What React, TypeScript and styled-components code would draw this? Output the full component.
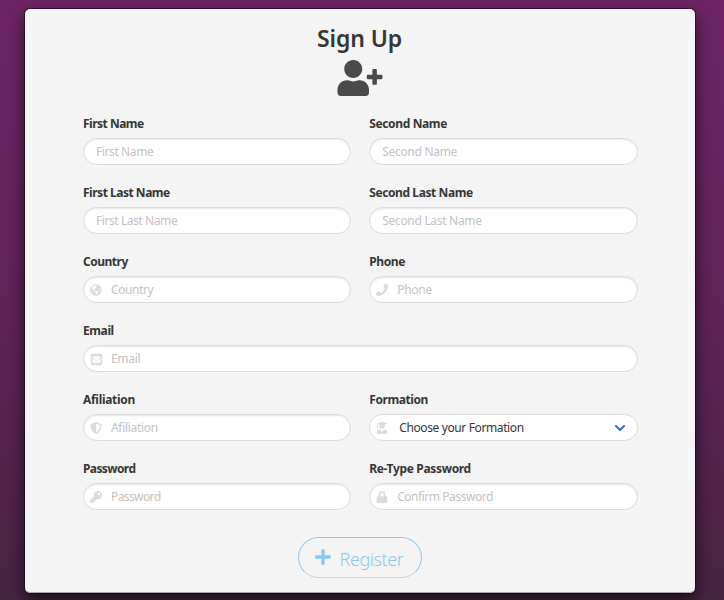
import React from "react";
import styled, { createGlobalStyle } from "styled-components";
import {
  FaUserPlus, FaGlobeAmericas, FaPhone, FaEnvelopeSquare, FaShieldAlt,
  FaUserGraduate, FaKey, FaLock, FaPlus,
} from "react-icons/fa";

const GlobalStyle = createGlobalStyle`
  *, *::before, *::after { box-sizing: border-box; }
  html, body { margin: 0; height: 100%; overflow: hidden; }
  body { font-family: "Noto Sans", "Open Sans", sans-serif; color: #363636; }
`;

const Page = styled.main`
  height: 600px;
  padding: 9px 29px 7px 25px;
  background: linear-gradient(#6c2562, #6a2460 20%, #5c2254 62%, #452440);
`;

const Card = styled.form`
  height: 584px;
  padding: 14px 57px 0 58px;
  border-radius: 5px;
  background: #f4f4f4;
  box-shadow: inset 0 -1px 0 #a9a5a9, 0 0 0 1px rgba(20, 5, 25, 0.6), 0 8px 16px rgba(10, 10, 10, 0.75);
`;

const Header = styled.header`
  display: flex;
  flex-direction: column;
  align-items: center;
  height: 92px;
  margin-right: 2px;
  color: #4a4a4a;
  svg { display: block; width: 46px; height: 36px; }
`;

const Title = styled.h1`
  margin: 0;
  height: 37px;
  font-size: 23px;
  font-weight: 600;
  line-height: 30px;
  letter-spacing: -0.1px;
  color: #363636;
`;

const Fields = styled.div`
  display: grid;
  grid-template-columns: 268.2px 268.8px;
  column-gap: 18px;
  grid-auto-rows: 69px;
`;

const Field = styled.div<{ $wide?: boolean }>`
  grid-column: ${(p) => (p.$wide ? "1 / -1" : "auto")};
`;

const Label = styled.label<{ $spacing: number }>`
  display: block;
  height: 23px;
  font-size: 12px;
  line-height: 18px;
  font-weight: 700;
  white-space: nowrap;
  letter-spacing: ${(p) => p.$spacing}px;
`;

const Control = styled.div<{ $select?: boolean }>`
  display: flex;
  align-items: center;
  height: 27px;
  padding: 0 12px;
  border: 1px solid #dbdbdb;
  border-radius: 14px;
  background: #fff;
  box-shadow: ${(p) => (p.$select ? "none" : "inset 0 1px 2px rgba(10, 10, 10, 0.1)")};
`;

const FieldIcon = styled.span`
  display: flex;
  justify-content: center;
  width: 12px;
  margin: 1px 9px 0 -6px;
  flex: none;
  color: #dbdbdb;
  svg { flex: none; width: 12px; height: 12px; }
`;

const EnvelopeIcon = styled(FaEnvelopeSquare)`
  && { width: 13px; height: 13px; }
`;

const Input = styled.input<{ $spacing: number }>`
  flex: 1;
  min-width: 0;
  padding: 0;
  border: 0;
  outline: 0;
  background: transparent;
  font: 400 12px/18px "Noto Sans", "Open Sans", sans-serif;
  letter-spacing: ${(p) => p.$spacing}px;
  &::placeholder { color: #c3c3c3; opacity: 1; }
`;

const Choice = styled.span`
  flex: 1;
  padding-left: 2px;
  font-size: 12px;
  line-height: 18px;
  letter-spacing: -0.38px;
`;

const Chevron = styled.svg`
  width: 12px;
  height: 8px;
  margin-right: -1px;
  fill: none;
  stroke: #3273dc;
  stroke-width: 2.2;
  stroke-linecap: round;
  stroke-linejoin: round;
`;

const Footer = styled.footer`
  display: flex;
  justify-content: center;
  margin: 8px 2px 0 0;
`;

const Button = styled.button`
  display: flex;
  align-items: center;
  width: 124px;
  height: 41px;
  padding: 0 0 0 16px;
  border: 1px solid #89c9f3;
  border-bottom-color: #b9def5;
  border-radius: 21px;
  background: transparent;
  color: #89c9f3;
  font: 300 18px/27px "Noto Sans", "Open Sans", sans-serif;
  letter-spacing: -0.42px;
  svg { width: 16px; height: 18px; margin: -2px 9px 0 0; }
  span { padding-top: 4px; }
`;

type FieldData = {
  label: string;
  hint: string;
  icon?: React.ReactNode;
  wide?: boolean;
  select?: boolean;
  labelSpacing?: number;
  hintSpacing?: number;
};

const fields: FieldData[] = [
  { label: "First Name", hint: "First Name", labelSpacing: -0.5, hintSpacing: -0.4 },
  { label: "Second Name", hint: "Second Name", labelSpacing: -0.36 },
  { label: "First Last Name", hint: "First Last Name", labelSpacing: -0.48, hintSpacing: -0.42 },
  { label: "Second Last Name", hint: "Second Last Name" },
  { label: "Country", hint: "Country", icon: <FaGlobeAmericas />, labelSpacing: -0.5, hintSpacing: -0.42 },
  { label: "Phone", hint: "Phone", icon: <FaPhone /> },
  { label: "Email", hint: "Email", icon: <EnvelopeIcon />, wide: true },
  { label: "Afiliation", hint: "Afiliation", icon: <FaShieldAlt />, labelSpacing: -0.3 },
  { label: "Formation", hint: "Choose your Formation", icon: <FaUserGraduate />, select: true },
  { label: "Password", hint: "Password", icon: <FaKey />, labelSpacing: -0.6, hintSpacing: -0.6 },
  { label: "Re-Type Password", hint: "Confirm Password", icon: <FaLock />, labelSpacing: -0.33, hintSpacing: -0.46 },
];

export default function App() {
  return (
    <>
      <GlobalStyle />
      <Page>
        <Card>
          <Header>
            <Title>Sign Up</Title>
            <FaUserPlus />
          </Header>
          <Fields>
            {fields.map((f) => (
              <Field key={f.label} $wide={f.wide}>
                <Label $spacing={f.labelSpacing ?? -0.4}>{f.label}</Label>
                <Control $select={f.select}>
                  {f.icon && <FieldIcon>{f.icon}</FieldIcon>}
                  {f.select ? (
                    <>
                      <Choice>{f.hint}</Choice>
                      <Chevron viewBox="0 0 12 8"><path d="M2 2l4 4 4-4" /></Chevron>
                    </>
                  ) : (
                    <Input $spacing={f.hintSpacing ?? -0.3} placeholder={f.hint} />
                  )}
                </Control>
              </Field>
            ))}
          </Fields>
          <Footer>
            <Button type="button">
              <FaPlus />
              <span>Register</span>
            </Button>
          </Footer>
        </Card>
      </Page>
    </>
  );
}
